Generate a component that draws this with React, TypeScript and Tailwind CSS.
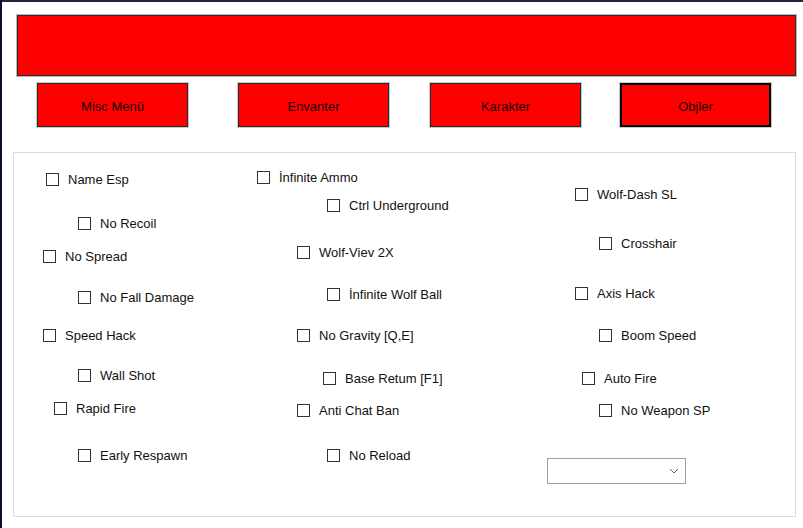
import React from 'react';

interface Item {
  label: string;
  x: number;
  mt: number;
}

const col1: Item[] = [
  { label: 'Name Esp', x: 32, mt: 18 },
  { label: 'No Recoil', x: 64, mt: 28 },
  { label: 'No Spread', x: 29, mt: 17 },
  { label: 'No Fall Damage', x: 64, mt: 25 },
  { label: 'Speed Hack', x: 29, mt: 22 },
  { label: 'Wall Shot', x: 64, mt: 24 },
  { label: 'Rapid Fire', x: 40, mt: 17 },
  { label: 'Early Respawn', x: 64, mt: 31 },
];

const col2: Item[] = [
  { label: 'İnfinite Ammo', x: 17, mt: 16 },
  { label: 'Ctrl Underground', x: 87, mt: 12 },
  { label: 'Wolf-Viev 2X', x: 57, mt: 31 },
  { label: 'İnfinite Wolf Ball', x: 87, mt: 26 },
  { label: 'No Gravity [Q,E]', x: 57, mt: 25 },
  { label: 'Base Retum [F1]', x: 83, mt: 27 },
  { label: 'Anti Chat Ban', x: 57, mt: 16 },
  { label: 'No Reload', x: 87, mt: 29 },
];

const col3: Item[] = [
  { label: 'Wolf-Dash SL', x: 45, mt: 33 },
  { label: 'Crosshair', x: 69, mt: 33 },
  { label: 'Axis Hack', x: 45, mt: 34 },
  { label: 'Boom Speed', x: 69, mt: 26 },
  { label: 'Auto Fire', x: 52, mt: 27 },
  { label: 'No Weapon SP', x: 69, mt: 16 },
];

function Check({ item }: { item: Item }) {
  return (
    <label
      className="flex h-[16px] items-center whitespace-nowrap"
      style={{ marginLeft: item.x, marginTop: item.mt }}
    >
      <span className="h-[13px] w-[13px] shrink-0 border border-[#333333] bg-white" />
      <span className="ml-[9px] text-[13px] leading-none text-[#111111]">{item.label}</span>
    </label>
  );
}

function MenuButton({ label, active = false, className = '' }: { label: string; active?: boolean; className?: string }) {
  return (
    <button
      className={`flex h-[44px] w-[151px] items-center justify-center bg-[#ff0000] pt-[3px] text-[13px] text-[#140000] outline outline-1 outline-[#c8c8c8] ${
        active ? 'border-2 border-black' : 'border border-[#2a2a2a]'
      } ${className}`}
    >
      {label}
    </button>
  );
}

export default function App() {
  return (
    <div className="flex h-[528px] w-[803px] overflow-hidden bg-white font-['Liberation_Sans',Arial,sans-serif]">
      <div className="w-[2px] shrink-0 bg-[#0b0a35]" />
      <div className="flex flex-1 flex-col">
        <div className="h-[2px] bg-[#23243a]" />

        {/* Title panel */}
        <div className="ml-[15px] mt-[13px] h-[61px] w-[779px] border border-[#2a2a2a] bg-[#ff0000] outline outline-1 outline-[#b8b8b8]" />

        {/* Tab buttons */}
        <div className="mt-[7px] flex">
          <MenuButton label="Misc Menü" className="ml-[35px]" />
          <MenuButton label="Envanter" className="ml-[50px]" />
          <MenuButton label="Karakter" className="ml-[41px]" />
          <MenuButton label="Objler" active className="ml-[39px]" />
        </div>

        {/* Group box */}
        <div className="ml-[11px] mt-[25px] flex h-[365px] w-[783px] border border-[#dcdcdc]">
          <div className="flex w-[226px] flex-col items-start">
            {col1.map((it) => (
              <Check key={it.label} item={it} />
            ))}
          </div>
          <div className="flex w-[290px] flex-col items-start">
            {col2.map((it) => (
              <Check key={it.label} item={it} />
            ))}
          </div>
          <div className="flex flex-1 flex-col items-start">
            {col3.map((it) => (
              <Check key={it.label} item={it} />
            ))}
            <div className="ml-[17px] mt-[40px] flex h-[26px] w-[139px] items-center justify-end border border-[#a0a0a0] bg-white pr-[6px]">
              <svg width="10" height="6" viewBox="0 0 10 6" fill="none">
                <path d="M1 1 L5 5 L9 1" stroke="#606060" strokeWidth="1" />
              </svg>
            </div>
          </div>
        </div>
      </div>
    </div>
  );
}
